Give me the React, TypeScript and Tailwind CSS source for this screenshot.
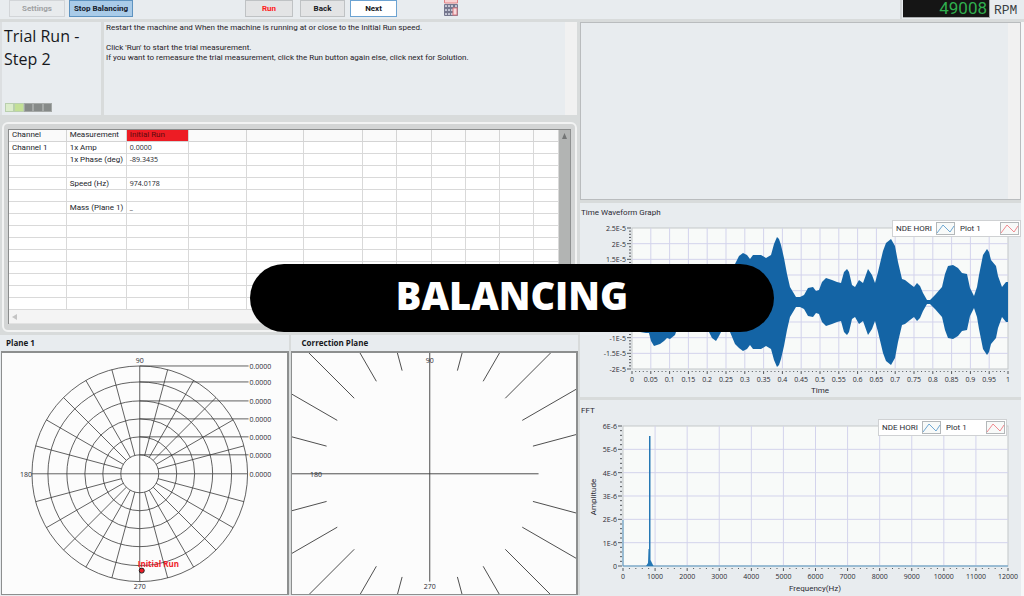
import { useId, type ReactNode } from "react";
import clsx from "clsx";

const INK = "#2b2b33";
const WAVE_COLOR = "#1464a5";

// [x, depth below zero, height above zero if it differs], in plot pixels
const ENVELOPE: [number, number, number?][] = [
  [0, 12], [4, 24], [8, 30], [14, 31], [17, 31], [19, 39, 32], [22, 44, 34], [28, 42, 34], [32, 39, 33],
  [35, 36, 32], [38, 37, 32], [43, 33, 30], [46, 24], [54, 16], [64, 12], [72, 20], [77, 30], [80, 36, 33],
  [84, 39, 34], [87, 34, 32], [91, 26], [95, 24], [98, 30], [103, 42, 38], [107, 46], [111, 49],
  [115, 47], [118, 43], [121, 47], [129, 47], [134, 44], [139, 47], [142, 58], [145, 65], [147, 63],
  [149, 57], [152, 44], [155, 28], [158, 15], [164, 5], [168, 5], [172, 7], [176, 14], [181, 15],
  [184, 11], [187, 12], [190, 20], [194, 24], [200, 22], [205, 20], [209, 19], [212, 30], [215, 33],
  [217, 30], [220, 17], [223, 15], [227, 22], [231, 19], [236, 33], [240, 27], [243, 19], [246, 30],
  [251, 51], [254, 59], [259, 63], [263, 56], [266, 40], [270, 23], [273, 22], [278, 18], [282, 15],
  [285, 19], [288, 16], [291, 9], [295, 2], [298, 2], [303, 7], [310, 15], [313, 28], [316, 36],
  [321, 37], [326, 34], [330, 29], [335, 28], [338, 14], [342, 6], [345, 15], [347, 27], [351, 47],
  [355, 53], [357, 50], [359, 42], [364, 36], [366, 26], [370, 15], [374, 20], [376, 20],
];

const COLUMN_WIDTHS = [
  "w-[57px]",
  "w-[60px]",
  "w-[62px]",
  "w-[58px]",
  "w-[57px]",
  "w-[59px]",
  "w-[34px]",
  "w-[34px]",
  "w-[34px]",
  "w-[34px]",
  "w-[34px]",
  "w-[25px]",
];

const MEASUREMENTS: string[][] = [
  ["Channel 1", "1x Amp", "0.0000"],
  ["", "1x Phase (deg)", "-89.3435"],
  [],
  ["", "Speed (Hz)", "974.0178"],
  [],
  ["", "Mass (Plane 1)", "_"],
  ...Array.from({ length: 8 }, () => []),
];

const SPOKE_ANGLES = Array.from({ length: 24 }, (_, i) => i * 15).filter((a) => a % 90 !== 0);

function polar(cx: number, cy: number, radius: number, degrees: number) {
  const rad = (degrees * Math.PI) / 180;
  return { x: cx + radius * Math.cos(rad), y: cy - radius * Math.sin(rad) };
}

type ToolButtonProps = {
  children: ReactNode;
  className: string;
  disabled?: boolean;
};

function ToolButton({ children, className, disabled }: ToolButtonProps) {
  return (
    <button
      type="button"
      disabled={disabled}
      className={clsx(
        "flex h-[17px] items-center justify-center border font-['Roboto',sans-serif] text-[8px] font-bold whitespace-nowrap",
        className,
      )}
    >
      {children}
    </button>
  );
}

function CalculatorIcon() {
  return (
    <svg viewBox="0 0 14 16" className="h-4 w-3.5" aria-hidden="true">
      <rect x="0.500" width="13" height="3" fill="#f9d3d3" />
      <path d="M0.500 0v3h13V0" fill="none" stroke="#e28286" />
      <rect y="4" width="14" height="12" rx="1" fill="#75778e" />
      {[5, 9, 13].map((y) =>
        [1, 4, 7, 11].map((x) => <rect key={`${x}-${y}`} x={x} y={y} width="2" height="2" rx="0.500" fill="#c9cbd8" />),
      )}
      <rect x="9" y="8" width="4" height="7" fill="#f6dcde" stroke="#dd7a80" />
    </svg>
  );
}

function Toolbar() {
  return (
    <header className="flex h-[22px] border-b-[3px] border-[#d8dbdb] pl-[9px]">
      <div className="flex flex-1 items-start">
        <ToolButton disabled className="w-14 border-[#d2d5d8] bg-[#e8ebed] text-[#a0a2a4]">
          Settings
        </ToolButton>
        <ToolButton className="ml-1 w-16 border-[#5e93c0] bg-[#a9cbe8] text-[#16202c]">Stop Balancing</ToolButton>
        <ToolButton className="ml-28 w-12 border-[#bfc2c4] bg-[#e3e4e5] text-[#ff2020]">Run</ToolButton>
        <ToolButton className="ml-[7px] w-[45px] border-[#bfc2c4] bg-[#e3e4e5] text-[#16181c]">Back</ToolButton>
        <ToolButton className="ml-[5px] w-[47px] border-[#6ca3d2] bg-white text-[#16181c]">Next</ToolButton>
        <button type="button" aria-label="Calculator" className="ml-[47px]">
          <CalculatorIcon />
        </button>
      </div>
      <div className="flex border-l-2 border-[#d3d6d8] pl-px">
        <output className="h-[18px] w-[87px] border-r border-b border-[#a8abad] bg-[#151515] pr-0.5 text-right font-['Roboto',sans-serif] text-[17px] leading-[17px] text-[#2fae4e]">
          49008
        </output>
        <span className="mt-[5px] w-[34px] pl-1 font-['Liberation_Mono',monospace] text-[13px] leading-3 text-[#3b3f44]">
          RPM
        </span>
      </div>
    </header>
  );
}

function Instructions() {
  return (
    <section className="flex h-[93px] border-l-2 border-[#dcdfe1]">
      <div className="flex w-[99px] flex-col justify-between pt-[3px] pb-[3px] pl-0.5">
        <h1 className="text-[16px] leading-[23px] text-[#16181c]">
          Trial Run -<br />
          Step 2
        </h1>
        <div className="ml-px flex" role="progressbar" aria-valuemin={0} aria-valuemax={5} aria-valuenow={2} aria-label="Steps">
          <span className="h-[9px] w-[9px] border border-[#b9cfae] bg-[#dcedcb]" />
          <span className="h-[9px] w-[10px] border border-[#b9cfae] bg-[#c3e096]" />
          <span className="h-[9px] w-[9px] border border-[#a4a8a6] bg-[#868a88]" />
          <span className="h-[9px] w-[10px] border border-[#a4a8a6] bg-[#868a88]" />
          <span className="h-[9px] w-[9px] border border-[#a4a8a6] bg-[#868a88]" />
        </div>
      </div>
      <div className="flex-1 border-l-[3px] border-[#d8dbdb] pt-px pl-0.5 font-['Roboto',sans-serif] text-[8px] leading-[10px] text-[#1f2126]">
        <p>Restart the machine and When the machine is running at or close to the Initial Run speed.</p>
        <p className="mt-[10px]">Click 'Run' to start the trial measurement.</p>
        <p>If you want to remeasure the trial measurement, click the Run button again else, click next for Solution.</p>
      </div>
      <div className="w-[15px] border-r-[3px] border-[#d8dbdb] bg-[#f1f1f1]" />
    </section>
  );
}

function MeasurementTable() {
  return (
    <section className="bg-[#d8dbdb] pt-[7px] pr-[3px] pb-[3px] pl-0.5">
      <div className="rounded-md border-2 border-[#f2f3f3] bg-[#d3d5d5] px-1 pt-[5px] pb-[6px]">
        <div className="flex border-t border-l border-[#8a8c8c]">
          <div className="min-w-0 flex-1">
            <table className="w-full table-fixed border-collapse bg-white text-[#22242a]">
              <colgroup>
                {COLUMN_WIDTHS.map((width, i) => (
                  <col key={i} className={width} />
                ))}
              </colgroup>
              <thead>
                <tr className="bg-[#fafafa]">
                  {COLUMN_WIDTHS.map((_, i) => (
                    <th
                      key={i}
                      className={clsx(
                        "h-[11px] border-r border-b border-[#d4d4d4] p-0 pl-[3px] text-left font-['Roboto',sans-serif] text-[8px] leading-[10px] font-normal whitespace-nowrap",
                        i === 2 && "bg-[#ed1c24] text-[#5e0a0e]",
                      )}
                    >
                      {["Channel", "Measurement", "Initial Run"][i]}
                    </th>
                  ))}
                </tr>
              </thead>
              <tbody>
                {MEASUREMENTS.map((row, r) => (
                  <tr key={r} className="h-3">
                    {COLUMN_WIDTHS.map((_, i) => (
                      <td
                        key={i}
                        className={clsx(
                          "border-r border-b border-[#d9d9d9] p-0 pl-[3px] leading-[11px] whitespace-nowrap",
                          i < 2 && "font-['Roboto',sans-serif] text-[8px]",
                        )}
                      >
                        {row[i]}
                      </td>
                    ))}
                  </tr>
                ))}
              </tbody>
            </table>
            <div className="flex h-[14px] items-end border-b border-[#e2e2e2] bg-[#f4f4f4] pb-[3px] pl-[3px]">
              <svg viewBox="0 0 5 6" className="h-1.5 w-[5px]" aria-hidden="true">
                <path d="M5 0v6L0 3z" fill="#c4c4c4" />
              </svg>
            </div>
          </div>
          <div className="w-3 border-r border-[#8f9191] bg-[#b2b4b3] pt-[3px] pl-[3px]">
            <svg viewBox="0 0 5 6" className="h-1.5 w-[5px]" aria-hidden="true">
              <path d="M0 6h5L2.500 0z" fill="#737575" />
            </svg>
          </div>
        </div>
      </div>
    </section>
  );
}

function PlanePanel({ title, titleClass, children }: { title: string; titleClass: string; children: ReactNode }) {
  return (
    <section className="flex min-w-0 flex-1 flex-col border-r-2 border-[#d8dbdb]">
      <h2 className={clsx("h-4 text-[8px] leading-[15px] font-bold text-[#16181c]", titleClass)}>{title}</h2>
      <div className="border-t-2 border-r-2 border-b border-l border-[#8d8f8f] bg-[#fcfcfc]">{children}</div>
    </section>
  );
}

function PlanePlot() {
  const cx = 138;
  const cy = 121;
  const rings = [19, 37, 55, 73, 92, 108];

  return (
    <svg viewBox="0 0 285 242" className="block w-full text-[7px]" role="img" aria-label="Plane 1 polar plot">
      <g fill="none" stroke="#3a3a3a" strokeWidth="0.8">
        {rings.map((r) => (
          <circle key={r} cx={cx} cy={cy} r={r} />
        ))}
        {SPOKE_ANGLES.map((angle) => {
          const from = polar(cx, cy, 19, angle);
          const to = polar(cx, cy, 108, angle);
          return <line key={angle} x1={from.x} y1={from.y} x2={to.x} y2={to.y} />;
        })}
        <line x1={cx - 108} y1={cy} x2={cx + 108} y2={cy} />
        <line x1={cx} y1={cy - 108} x2={cx} y2={cy + 108} />
        {rings.map((r) => (
          <line key={r} x1={cx} y1={cy - r} x2="247" y2={cy - r} />
        ))}
      </g>
      <g fill={INK}>
        {[0, ...rings].map((r) => (
          <text key={r} x="248" y={cy - r + 3}>
            0.0000
          </text>
        ))}
        <text x={cx} y="10" textAnchor="middle">90</text>
        <text x="30" y={cy + 3} textAnchor="end">180</text>
        <text x={cx} y="236" textAnchor="middle">270</text>
      </g>
      <text x="136" y="214" fill="#f01c28" className="text-[8px] font-bold">
        Initial Run
      </text>
      <circle cx="140" cy="218" r="2.500" fill="#ee1c25" stroke="#1c1c1c" />
    </svg>
  );
}

function CorrectionPlot() {
  const cx = 138;
  const cy = 121;

  return (
    <svg viewBox="0 0 285 242" className="block w-full text-[7px]" role="img" aria-label="Correction plane polar plot">
      <g stroke="#3a3a3a" strokeWidth="0.9">
        {SPOKE_ANGLES.map((angle) => {
          const from = polar(cx, cy, 107, angle);
          const to = polar(cx, cy, 260, angle);
          return <line key={angle} x1={from.x} y1={from.y} x2={to.x} y2={to.y} />;
        })}
        <line x1="0" y1={cy} x2="247" y2={cy} />
        <line x1={cx} y1="0" x2={cx} y2="229" />
      </g>
      <g fill={INK}>
        <text x={cx} y="10" textAnchor="middle">90</text>
        <text x="30" y={cy + 3} textAnchor="end">180</text>
        <text x={cx} y="236" textAnchor="middle">270</text>
      </g>
    </svg>
  );
}

function Legend({ x, y }: { x: number; y: number }) {
  return (
    <g transform={`translate(${x} ${y})`} className="font-['Roboto',sans-serif] text-[8px]">
      <rect x="0.500" y="0.500" width="128" height="16" fill="#fff" stroke="#cfd1d3" />
      <text x="4" y="11" fill={INK}>NDE HORI</text>
      <rect x="44.500" y="2.500" width="18" height="12" fill="#f8faf9" stroke="#b4b8ba" />
      <path d="M45 13l6-8 7 7 4-6" fill="none" stroke="#6fa8d3" />
      <text x="68" y="11" fill={INK}>Plot 1</text>
      <rect x="108.500" y="2.500" width="18" height="12" fill="#f8faf9" stroke="#b4b8ba" />
      <path d="M109 13l6-8 7 7 4-6" fill="none" stroke="#f08a90" />
    </g>
  );
}

type AxesProps = {
  left: number;
  top: number;
  width: number;
  height: number;
  xLabels: string[];
  yLabels: string[];
  children: ReactNode;
};

// Grid, ticks and tick labels round a plot area. yLabels run from top to bottom.
function Axes({ left, top, width, height, xLabels, yLabels, children }: AxesProps) {
  const bottom = top + height;
  const right = left + width;
  const xStep = width / (xLabels.length - 1);
  const yStep = height / (yLabels.length - 1);
  const xMinor = Array.from({ length: (xLabels.length - 1) * 5 + 1 }, (_, i) => left + (i * xStep) / 5);
  const yMinor = Array.from({ length: (yLabels.length - 1) * 5 + 1 }, (_, i) => top + (i * yStep) / 5);

  return (
    <>
      <rect x={left} y={top} width={width} height={height} fill="#f8faf9" stroke="#c3c7c9" />
      <g stroke="#d3d3ec">
        {xLabels.slice(1, -1).map((label, i) => (
          <line key={label} x1={left + (i + 1) * xStep} y1={top} x2={left + (i + 1) * xStep} y2={bottom} />
        ))}
        {yLabels.slice(1, -1).map((_, i) => (
          <line key={i} x1={left} y1={top + (i + 1) * yStep} x2={right} y2={top + (i + 1) * yStep} />
        ))}
      </g>
      {children}
      <g stroke="#55585c">
        {xMinor.map((x, i) => (
          <line key={x} x1={x} y1={bottom + 2} x2={x} y2={bottom + (i % 5 === 0 ? 5 : 3)} />
        ))}
        {yMinor.map((y, i) => (
          <line key={y} x1={left - (i % 5 === 0 ? 5 : 3)} y1={y} x2={left - 1} y2={y} />
        ))}
      </g>
      <g fill={INK}>
        {xLabels.map((label, i) => (
          <text key={label} x={left + i * xStep} y={bottom + 13} textAnchor="middle">
            {label}
          </text>
        ))}
        {yLabels.map(
          (label, i) =>
            label && (
              <text key={label} x={left - 6} y={top + i * yStep + 3} textAnchor="end">
                {label}
              </text>
            ),
        )}
      </g>
    </>
  );
}

function WaveformGraph() {
  const titleId = useId();
  const xLabels = Array.from({ length: 21 }, (_, i) => String(i / 20));
  // the ticks behind the banner carry no label
  const yLabels = ["2.5E-5", "2E-5", "1.5E-5", "", "", "", "", "-1E-5", "-1.5E-5", "-2E-5"];
  const upper = ENVELOPE.map(([x, depth, height = depth]) => `${52 + x},${99 - height}`);
  const lower = ENVELOPE.map(([x, depth]) => `${52 + x},${99 + depth}`).reverse();

  return (
    <section aria-labelledby={titleId} className="border-y-[3px] border-[#d8dbdb]">
      <svg viewBox="0 0 441 194" className="block w-full text-[7px]">
        <text id={titleId} x="1" y="12" fill={INK} className="font-['Roboto',sans-serif] text-[8px]">
          Time Waveform Graph
        </text>
        <Axes left={52} top={25} width={376} height={141} xLabels={xLabels} yLabels={yLabels}>
          <polygon points={[...upper, ...lower].join(" ")} fill={WAVE_COLOR} />
        </Axes>
        <text x="240" y="190" textAnchor="middle" fill={INK} className="font-['Roboto',sans-serif] text-[8px]">
          Time
        </text>
        <Legend x={312} y={17} />
      </svg>
    </section>
  );
}

function FftGraph() {
  const titleId = useId();
  const xLabels = Array.from({ length: 13 }, (_, i) => String(i * 1000));
  const yLabels = ["6E-6", "5E-6", "4E-6", "3E-6", "2E-6", "1E-6", "0"];

  return (
    <section aria-labelledby={titleId}>
      <svg viewBox="0 0 441 196" className="block w-full text-[7px]">
        <text id={titleId} x="1" y="13" fill={INK} className="font-['Roboto',sans-serif] text-[8px]">
          FFT
        </text>
        <Axes left={43} top={26} width={385} height={140} xLabels={xLabels} yLabels={yLabels}>
          <path d="M43 120V166H428" fill="none" stroke="#5b9bc8" />
          <path d="M66 166l2-3 0.500-14h0.500V36h1.500v124l2 4 1 2z" fill="#2678b5" />
        </Axes>
        <text x="235" y="191" textAnchor="middle" fill={INK} className="font-['Roboto',sans-serif] text-[8px]">
          Frequency(Hz)
        </text>
        <text
          transform="translate(16 97) rotate(-90)"
          textAnchor="middle"
          fill={INK}
          className="font-['Roboto',sans-serif] text-[8px]"
        >
          Amplitude
        </text>
        <Legend x={298} y={19} />
      </svg>
    </section>
  );
}

export default function App() {
  return (
    <main className="relative min-h-screen w-full overflow-hidden bg-[#e8ecef] font-['Open_Sans','Noto_Sans',sans-serif] text-[7px]">
      <Toolbar />
      <div className="grid grid-cols-[580fr_444fr]">
        <div className="flex min-w-0 flex-col">
          <Instructions />
          <MeasurementTable />
          <div className="flex pl-px">
            <PlanePanel title="Plane 1" titleClass="pl-[5px]">
              <PlanePlot />
            </PlanePanel>
            <PlanePanel title="Correction Plane" titleClass="pl-[11px]">
              <CorrectionPlot />
            </PlanePanel>
          </div>
        </div>
        <div className="flex min-w-0 flex-col border-r-[3px] border-[#f6f7f8]">
          <div className="flex h-[178px] justify-end border border-[#b9bcbe]">
            <div className="w-3 bg-[#f1f1f1]" />
          </div>
          <WaveformGraph />
          <FftGraph />
        </div>
      </div>
      <div className="absolute top-1/2 left-1/2 flex h-[68px] w-[524px] -translate-x-1/2 -translate-y-1/2 items-center justify-center rounded-full bg-black pb-1.5 text-[38px] leading-none font-extrabold text-white">
        BALANCING
      </div>
    </main>
  );
}
